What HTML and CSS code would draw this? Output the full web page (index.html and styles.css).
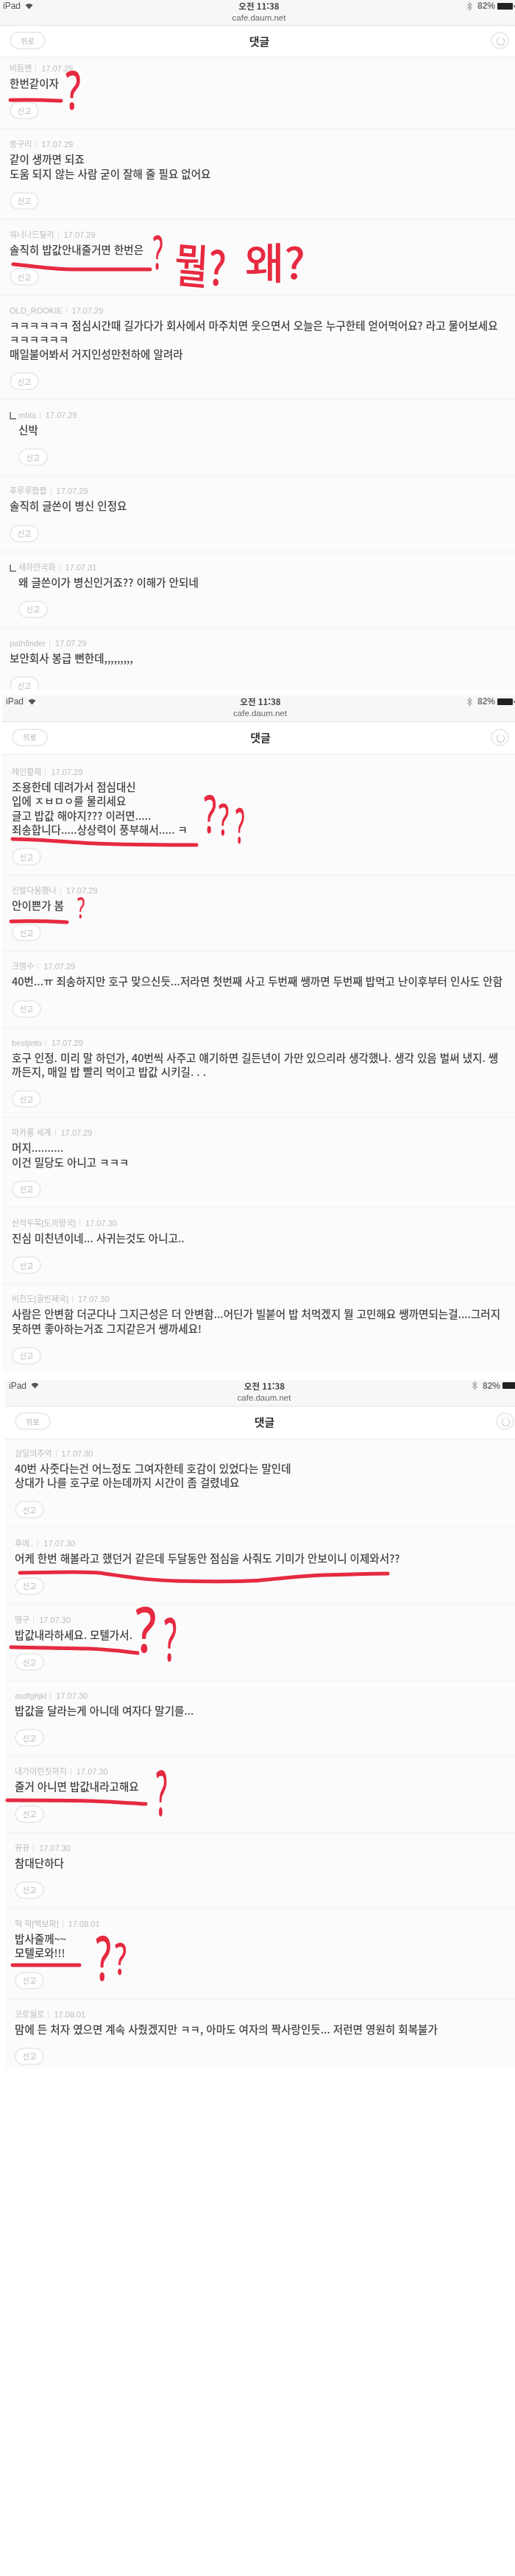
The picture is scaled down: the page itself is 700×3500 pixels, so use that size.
FILE: index.html
```html
<!DOCTYPE html>
<html lang="ko">
<head>
  <meta charset="UTF-8">
  <title>댓글</title>
  <meta name="viewport" content="width=device-width, initial-scale=1.0">
  <link rel="stylesheet" href="styles.css">
</head>
<body>

  <!-- First capture -->
  <section class="shot shot-a">
    <div class="status">
      <div class="status-row">
        <span class="device">iPad <svg class="wifi" viewBox="0 0 12 10"><path d="M6 9.5 0.5 3.2C3.6 0.4 8.4 0.4 11.5 3.2Z"/></svg></span>
        <span class="time">오전 11:38</span>
        <span class="power"><svg class="bt" viewBox="0 0 8 12"><path d="M1 3l6 5-3 3V1l3 3-6 5"/></svg>82%<span class="battery"></span></span>
      </div>
      <div class="url">cafe.daum.net</div>
    </div>
    <header class="nav">
      <button class="btn-back">뒤로</button>
      <h1>댓글</h1>
      <span class="refresh"></span>
    </header>
    <ul class="comments">
      <li class="comment">
        <p class="meta"><span class="name">비듬맨</span><span class="date">17.07.29</span></p>
        <p class="text">한번같이자</p>
        <button class="btn-report">신고</button>
      </li>
      <li class="comment">
        <p class="meta"><span class="name">뚱구리</span><span class="date">17.07.29</span></p>
        <p class="text">같이 생까면 되죠<br>도움 되지 않는 사람 굳이 잘해 줄 필요 없어요</p>
        <button class="btn-report">신고</button>
      </li>
      <li class="comment">
        <p class="meta"><span class="name">워너나드릴리</span><span class="date">17.07.29</span></p>
        <p class="text">솔직히 밥값안내줄거면 한번은</p>
        <button class="btn-report">신고</button>
      </li>
      <li class="comment">
        <p class="meta"><span class="name">OLD_ROOKIE</span><span class="date">17.07.29</span></p>
        <p class="text">ㅋㅋㅋㅋㅋㅋ 점심시간때 길가다가 회사에서 마주치면 웃으면서 오늘은 누구한테 얻어먹어요? 라고 물어보세요<br>ㅋㅋㅋㅋㅋㅋ<br>매일불어봐서 거지인성만천하에 알려라</p>
        <button class="btn-report">신고</button>
      </li>
      <li class="comment reply">
        <p class="meta"><span class="name">mbla</span><span class="date">17.07.29</span></p>
        <p class="text">신박</p>
        <button class="btn-report">신고</button>
      </li>
      <li class="comment">
        <p class="meta"><span class="name">후루루짭짭</span><span class="date">17.07.29</span></p>
        <p class="text">솔직히 글쓴이 병신 인정요</p>
        <button class="btn-report">신고</button>
      </li>
      <li class="comment reply">
        <p class="meta"><span class="name">새하얀국화</span><span class="date">17.07.31</span></p>
        <p class="text">왜 글쓴이가 병신인거죠?? 이해가 안되네</p>
        <button class="btn-report">신고</button>
      </li>
      <li class="comment">
        <p class="meta"><span class="name">pathfinder</span><span class="date">17.07.29</span></p>
        <p class="text">보안회사 봉급 뻔한데,,,,,,,,,</p>
        <button class="btn-report">신고</button>
      </li>
    </ul>
  </section>

  <!-- Second capture -->
  <section class="shot shot-b">
    <div class="status">
      <div class="status-row">
        <span class="device">iPad <svg class="wifi" viewBox="0 0 12 10"><path d="M6 9.5 0.5 3.2C3.6 0.4 8.4 0.4 11.5 3.2Z"/></svg></span>
        <span class="time">오전 11:38</span>
        <span class="power"><svg class="bt" viewBox="0 0 8 12"><path d="M1 3l6 5-3 3V1l3 3-6 5"/></svg>82%<span class="battery"></span></span>
      </div>
      <div class="url">cafe.daum.net</div>
    </div>
    <header class="nav">
      <button class="btn-back">뒤로</button>
      <h1>댓글</h1>
      <span class="refresh"></span>
    </header>
    <ul class="comments">
      <li class="comment">
        <p class="meta"><span class="name">레인황제</span><span class="date">17.07.29</span></p>
        <p class="text">조용한데 데려가서 점심대신<br>입에 ㅈㅂㅁㅇ를 물리세요<br>글고 밥값 해야지??? 이러면.....<br>죄송합니다.....상상력이 풍부해서..... ㅋ</p>
        <button class="btn-report">신고</button>
      </li>
      <li class="comment">
        <p class="meta"><span class="name">신발다움행나</span><span class="date">17.07.29</span></p>
        <p class="text">안이쁜가 봄</p>
        <button class="btn-report">신고</button>
      </li>
      <li class="comment">
        <p class="meta"><span class="name">크명수</span><span class="date">17.07.29</span></p>
        <p class="text">40번...ㅠ 죄송하지만 호구 맞으신듯...저라면 첫번째 사고 두번째 쌩까면 두번째 밥먹고 난이후부터 인사도 안함</p>
        <button class="btn-report">신고</button>
      </li>
      <li class="comment">
        <p class="meta"><span class="name">bestjinto</span><span class="date">17.07.29</span></p>
        <p class="text">호구 인정. 미리 말 하던가, 40번씩 사주고 얘기하면 길든년이 가만 있으리라 생각했나. 생각 있음 벌써 냈지. 쌩<br>까든지, 매일 밥 빨리 먹이고 밥값 시키길. . .</p>
        <button class="btn-report">신고</button>
      </li>
      <li class="comment">
        <p class="meta"><span class="name">마카롱 세계</span><span class="date">17.07.29</span></p>
        <p class="text">머지..........<br>이건 밀당도 아니고 ㅋㅋㅋ</p>
        <button class="btn-report">신고</button>
      </li>
      <li class="comment">
        <p class="meta"><span class="name">산적두목[도끼왕국]</span><span class="date">17.07.30</span></p>
        <p class="text">진심 미친년이네... 사귀는것도 아니고..</p>
        <button class="btn-report">신고</button>
      </li>
      <li class="comment">
        <p class="meta"><span class="name">비천도[골빈제국]</span><span class="date">17.07.30</span></p>
        <p class="text">사람은 안변함 더군다나 그지근성은 더 안변함...어딘가 빌붙어 밥 처먹겠지 뭘 고민해요 쌩까면되는걸....그러지<br>못하면 좋아하는거죠 그지같은거 쌩까세요!</p>
        <button class="btn-report">신고</button>
      </li>
    </ul>
  </section>

  <!-- Third capture -->
  <section class="shot shot-c">
    <div class="status">
      <div class="status-row">
        <span class="device">iPad <svg class="wifi" viewBox="0 0 12 10"><path d="M6 9.5 0.5 3.2C3.6 0.4 8.4 0.4 11.5 3.2Z"/></svg></span>
        <span class="time">오전 11:38</span>
        <span class="power"><svg class="bt" viewBox="0 0 8 12"><path d="M1 3l6 5-3 3V1l3 3-6 5"/></svg>82%<span class="battery"></span></span>
      </div>
      <div class="url">cafe.daum.net</div>
    </div>
    <header class="nav">
      <button class="btn-back">뒤로</button>
      <h1>댓글</h1>
      <span class="refresh"></span>
    </header>
    <ul class="comments">
      <li class="comment">
        <p class="meta"><span class="name">삼일의추억</span><span class="date">17.07.30</span></p>
        <p class="text">40번 사줏다는건 어느정도 그여자한테 호감이 있었다는 말인데<br>상대가 나를 호구로 아는데까지 시간이 좀 걸렸네요</p>
        <button class="btn-report">신고</button>
      </li>
      <li class="comment">
        <p class="meta"><span class="name">후에..</span><span class="date">17.07.30</span></p>
        <p class="text">어케 한번 해볼라고 했던거 같은데 두달동안 점심을 사줘도 기미가 안보이니 이제와서??</p>
        <button class="btn-report">신고</button>
      </li>
      <li class="comment">
        <p class="meta"><span class="name">뗑구</span><span class="date">17.07.30</span></p>
        <p class="text">밥값내라하세요. 모텔가서.</p>
        <button class="btn-report">신고</button>
      </li>
      <li class="comment">
        <p class="meta"><span class="name">asdfghjkl</span><span class="date">17.07.30</span></p>
        <p class="text">밥값을 달라는게 아니데 여자다 말기를...</p>
        <button class="btn-report">신고</button>
      </li>
      <li class="comment">
        <p class="meta"><span class="name">내가이런짓까지</span><span class="date">17.07.30</span></p>
        <p class="text">줄거 아니면 밥값내라고해요</p>
        <button class="btn-report">신고</button>
      </li>
      <li class="comment">
        <p class="meta"><span class="name">뀨뀨</span><span class="date">17.07.30</span></p>
        <p class="text">참대단하다</p>
        <button class="btn-report">신고</button>
      </li>
      <li class="comment">
        <p class="meta"><span class="name">헉 헉[백보파]</span><span class="date">17.08.01</span></p>
        <p class="text">밥사줄께~~<br>모텔로와!!!</p>
        <button class="btn-report">신고</button>
      </li>
      <li class="comment">
        <p class="meta"><span class="name">코로월로</span><span class="date">17.08.01</span></p>
        <p class="text">맘에 든 처자 였으면 계속 사줬겠지만 ㅋㅋ, 아마도 여자의 짝사랑인듯... 저런면 영원히 회복불가</p>
        <button class="btn-report">신고</button>
      </li>
    </ul>
  </section>

  <!-- Red pen marks drawn over the captures -->
  <div class="marks">
    <svg class="ink" viewBox="0 0 700 2810">
      <path d="M14 136C40 135 62 136 83 137"/>
      <path d="M18 359C50 362 70 366 100 366S180 366 204 366"/>
      <path d="M17 1140C60 1141 80 1143 110 1145S200 1148 267 1148"/>
      <path d="M15 1252C40 1251 70 1252 91 1253"/>
      <path d="M27 2137C70 2136 115 2135 134 2137S190 2147 240 2148S330 2149 355 2147S410 2141 440 2140S500 2138 527 2138"/>
      <path d="M15 2238C60 2239 90 2239 120 2240S170 2244 187 2246"/>
      <path d="M10 2446C60 2446 100 2446 125 2447S180 2450 198 2451"/>
      <path d="M17 2670H108"/>
    </svg>
    <span class="pen q1">?</span>
    <span class="pen q2">?</span>
    <span class="pen word-a">뭘?</span>
    <span class="pen word-b">왜?</span>
    <span class="pen q3">?</span>
    <span class="pen q4">?</span>
    <span class="pen q5">?</span>
    <span class="pen q6">?</span>
    <span class="pen q7">?</span>
    <span class="pen q8">?</span>
    <span class="pen q9">?</span>
    <span class="pen q10">?</span>
    <span class="pen q11">?</span>
  </div>

</body>
</html>
```

FILE: styles.css
```css
* {
  margin: 0;
  padding: 0;
  box-sizing: border-box;
}

html {
  overflow-x: hidden;
}

body {
  position: relative;
  background: #fff;
  font-family: "Noto Sans CJK KR", "Noto Sans", sans-serif;
  color: #444;
}

ul {
  list-style: none;
}

button {
  font-family: inherit;
  background: #fff;
  color: #b5b5b5;
  border: 2px solid #ececec;
  display: flex;
  align-items: center;
  justify-content: center;
}

/* Captures are not quite lined up, each one sits a little further right */
.shot {
  overflow: hidden;
  filter: blur(0.6px);
}

.shot-a {
  height: 937px;
  margin-bottom: 8px;
}

.shot-b {
  margin-left: 3px;
  margin-bottom: 9px;
}

.shot-c {
  margin-left: 7px;
  width: 700px;
}

/* Safari bar */
.status {
  height: 36px;
  background: #f7f7f7;
  border-bottom: 1px solid #e2e2e2;
  padding: 1px 0 0 4px;
}

.shot-a .status {
  height: 35px;
}

.status-row {
  display: grid;
  grid-template-columns: 1fr auto 1fr;
  align-items: center;
  height: 14px;
  font: 12px/14px "Liberation Sans", sans-serif;
  color: #555;
}

.shot-b .status-row,
.shot-c .status-row {
  padding-left: 1px;
}

.device {
  display: flex;
  align-items: center;
  gap: 6px;
}

.wifi {
  width: 11px;
  height: 9px;
  fill: #555;
}

.time {
  font-family: "Noto Sans CJK KR", sans-serif;
  font-weight: 700;
  font-size: 11.5px;
  color: #444;
}

.power {
  display: flex;
  align-items: center;
  justify-content: flex-end;
  gap: 3px;
  font-weight: 700;
  color: #777;
}

.bt {
  width: 8px;
  height: 13px;
  fill: none;
  stroke: #aaa;
  stroke-width: 1.2;
  margin-right: 4px;
}

.battery {
  position: relative;
  width: 21px;
  height: 9px;
  background: #222;
  border-radius: 1px;
  margin-right: 3px;
}

.battery::after {
  content: "";
  position: absolute;
  right: -3px;
  top: 3px;
  width: 2px;
  height: 3px;
  background: #888;
}

.url {
  margin-top: 2px;
  text-align: center;
  font: 11.5px/14px "Liberation Sans", sans-serif;
  color: #666;
}

/* Page header */
.nav {
  display: grid;
  grid-template-columns: 1fr auto 1fr;
  align-items: center;
  height: 45px;
  padding: 0 8px 2px 13px;
  background: #fff;
  border-bottom: 2px solid #f4f4f4;
}

.shot-a .nav {
  height: 44px;
}

.nav h1 {
  font-size: 15px;
  font-weight: 700;
  color: #333;
}

.btn-back {
  width: 49px;
  height: 24px;
  border-radius: 12px;
  font-size: 10px;
}

.refresh {
  position: relative;
  justify-self: end;
  width: 25px;
  height: 24px;
  border: 2px solid #ececec;
  border-radius: 50%;
}

.refresh::after {
  content: "";
  position: absolute;
  left: 6px;
  top: 5px;
  width: 9px;
  height: 10px;
  border: 1.5px solid #c4c4c4;
  border-top-color: #e8e8e8;
  border-radius: 50%;
}

/* Comment list */
.comments {
  background: #fbfbfb;
}

.shot-a .comments {
  padding-top: 4px;
}

.shot-b .comments {
  padding-top: 13px;
}

.shot-c .comments {
  padding-top: 9px;
}

.comment {
  padding: 10px 13px 12px;
  border-bottom: 2px solid #f5f5f5;
}

.comment:first-child {
  padding-top: 0;
}

.comment:last-child {
  border-bottom: 0;
}

.shot-c .comment:last-child {
  padding-bottom: 4px;
}

.meta {
  display: flex;
  align-items: center;
  height: 20px;
  font: 11px/20px "Liberation Sans", "Noto Sans CJK KR", sans-serif;
  color: #bdbdbd;
}

.name::after {
  content: "";
  display: inline-block;
  width: 1px;
  height: 10px;
  margin: 0 7px 0 5px;
  vertical-align: -1px;
  background: #e2e2e2;
}

.text {
  font-size: 14.55px;
  font-weight: 500;
  line-height: 19.3px;
  color: #444;
}

.btn-report {
  width: 40px;
  height: 24px;
  margin-top: 16px;
  border-radius: 12px;
  font-size: 10px;
}

.reply {
  position: relative;
  padding-left: 25px;
}

.reply::before {
  content: "";
  position: absolute;
  left: 13px;
  top: 16px;
  width: 7px;
  height: 8px;
  border-left: 2px solid #888;
  border-bottom: 2px solid #888;
}

/* Pen marks */
.marks {
  position: absolute;
  left: 0;
  top: 0;
  width: 700px;
  height: 2810px;
  pointer-events: none;
}

.ink {
  position: absolute;
  left: 0;
  top: 0;
  width: 700px;
  height: 2810px;
  fill: none;
  stroke: #e62a40;
  stroke-width: 5;
  stroke-linecap: round;
}

.pen {
  position: absolute;
  transform-origin: 0 0;
  font-family: "Noto Sans", sans-serif;
  font-weight: 500;
  line-height: 1;
  color: #e62a40;
}

.q1 { left: 89px; top: 85px; font-size: 72px; transform: scaleX(.65); }
.q2 { left: 208px; top: 310px; font-size: 64px; transform: scaleX(.47); }
.word-a { left: 239px; top: 323px; font-family: "Noto Sans CJK KR", sans-serif; font-size: 64px; transform: scaleX(.78) rotate(4deg); }
.word-b { left: 333px; top: 325px; font-family: "Noto Sans CJK KR", sans-serif; font-size: 58px; }
.q3 { left: 277px; top: 1070px; font-size: 70px; transform: scaleX(.55); }
.q4 { left: 297px; top: 1082px; font-size: 60px; transform: scaleX(.53); }
.q5 { left: 320px; top: 1086px; font-size: 68px; transform: scaleX(.41); }
.q6 { left: 105px; top: 1213px; font-size: 40px; transform: scaleX(.58); }
.q7 { left: 184px; top: 2170px; font-size: 85px; transform: scaleX(.75); }
.q8 { left: 223px; top: 2184px; font-size: 82px; transform: scaleX(.47); }
.q9 { left: 212px; top: 2392px; font-size: 85px; transform: scaleX(.4); }
.q10 { left: 130px; top: 2617px; font-size: 84px; transform: scaleX(.56); }
.q11 { left: 156px; top: 2630px; font-size: 60px; transform: scaleX(.6); }
```
